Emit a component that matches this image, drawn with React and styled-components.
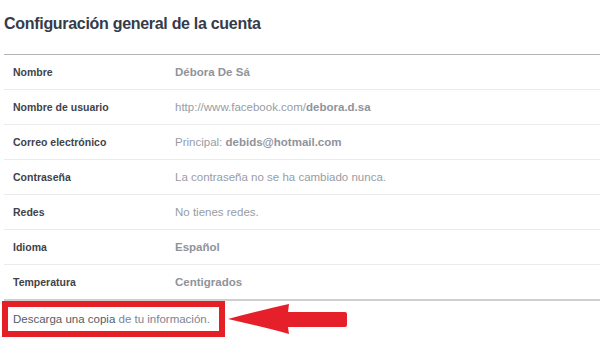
import React from 'react';
import styled, { createGlobalStyle } from 'styled-components';

const rows = [
    { label: 'Nombre', value: [{ text: 'Débora De Sá', strong: true }] },
    {
        label: 'Nombre de usuario',
        value: [{ text: 'http://www.facebook.com/' }, { text: 'debora.d.sa', strong: true }],
    },
    {
        label: 'Correo electrónico',
        value: [{ text: 'Principal: ' }, { text: 'debids@hotmail.com', strong: true }],
    },
    { label: 'Contraseña', value: [{ text: 'La contraseña no se ha cambiado nunca.' }] },
    { label: 'Redes', value: [{ text: 'No tienes redes.' }] },
    { label: 'Idioma', value: [{ text: 'Español', strong: true }] },
    { label: 'Temperatura', value: [{ text: 'Centigrados', strong: true }] },
];

const App = () => {
    return (
        <Page>
            <GlobalStyle />
            <Title>Configuración general de la cuenta</Title>
            <Settings>
                {rows.map((row, i) => (
                    <Row key={row.label} last={i === rows.length - 1}>
                        <Label>{row.label}</Label>
                        <Value>
                            {row.value.map((part, j) =>
                                part.strong ? <b key={j}>{part.text}</b> : <span key={j}>{part.text}</span>
                            )}
                        </Value>
                    </Row>
                ))}
            </Settings>
            <Footer>
                <Highlight>
                    <DownloadText>
                        Descarga una copia <a href="#">de tu información.</a>
                    </DownloadText>
                </Highlight>
                <Arrow width="122" height="30" viewBox="0 0 122 30">
                    <path
                        d="M1 15 C 22 9, 45 4, 62 0 L 61 8 L 118 8 Q 120 8 120 10 L 120 21 Q 120 23 118 23 L 61 23 L 62 30 C 45 25, 22 20, 1 15 Z"
                        fill="#e6202a"
                    />
                </Arrow>
            </Footer>
        </Page>
    );
};

export default App;

const GlobalStyle = createGlobalStyle`
    body {
        margin: 0;
        background: #fff;
        font-family: "Liberation Sans", Arial, sans-serif;
    }
`;

const Page = styled.div`
    width: 600px;
    height: 346px;
    overflow: hidden;
`;

const Title = styled.h1`
    margin: 0;
    padding: 14px 0 20px 4px;
    font-size: 16px;
    line-height: 20px;
    letter-spacing: -0.3px;
    font-weight: bold;
    color: #353b49;
`;

const Settings = styled.div`
    margin-left: 4px;
    border-top: 1px solid #b4b4b4;
`;

const Row = styled.div`
    display: flex;
    align-items: center;
    height: 34px;
    border-bottom: ${({ last }) => (last ? '2px solid #cfcfcf' : '1px solid #ebebeb')};
`;

const Label = styled.div`
    width: 162px;
    padding-left: 9px;
    font-size: 10.5px;
    font-weight: bold;
    color: #3f434a;
`;

const Value = styled.div`
    font-size: 11.5px;
    color: #989ca5;

    b {
        color: #8f939b;
    }
`;

const Footer = styled.div`
    display: flex;
    align-items: center;
    margin-left: 2px;
`;

const Highlight = styled.div`
    box-sizing: border-box;
    width: 223px;
    height: 36px;
    border: 6px solid #e41f26;
    display: flex;
    align-items: center;
    padding-left: 5px;
`;

const DownloadText = styled.span`
    font-size: 11.5px;
    color: #565c68;

    a {
        color: #7d8493;
        text-decoration: none;
    }
`;

const Arrow = styled.svg`
    display: block;
    margin-left: 2px;
`;
